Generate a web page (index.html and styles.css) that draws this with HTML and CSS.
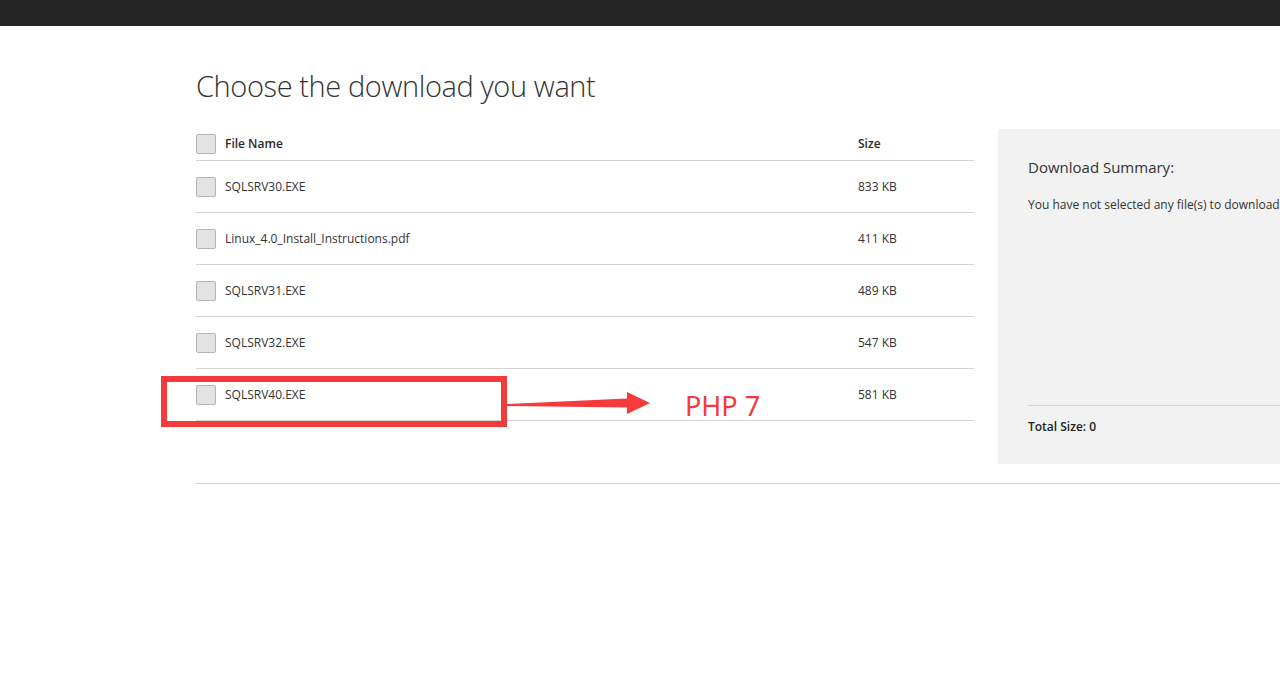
FILE: index.html
```html
<!DOCTYPE html>
<html>
<head>
  <title>Choose the download you want</title>
  <link rel="stylesheet" href="styles.css">
</head>
<body>

<div class="topbar"></div>

<div class="content">
  <h1>Choose the download you want</h1>

  <div class="layout">
    <div class="files">
      <div class="row head">
        <span class="check"></span>
        <span class="name">File Name</span>
        <span class="size">Size</span>
      </div>
      <div class="row">
        <span class="check"></span>
        <span class="name">SQLSRV30.EXE</span>
        <span class="size">833 KB</span>
      </div>
      <div class="row">
        <span class="check"></span>
        <span class="name">Linux_4.0_Install_Instructions.pdf</span>
        <span class="size">411 KB</span>
      </div>
      <div class="row">
        <span class="check"></span>
        <span class="name">SQLSRV31.EXE</span>
        <span class="size">489 KB</span>
      </div>
      <div class="row">
        <span class="check"></span>
        <span class="name">SQLSRV32.EXE</span>
        <span class="size">547 KB</span>
      </div>
      <div class="row">
        <span class="check"></span>
        <span class="name">SQLSRV40.EXE</span>
        <span class="size">581 KB</span>
      </div>
    </div>

    <div class="summary">
      <div class="summary-body">
        <h2>Download Summary:</h2>
        <p>You have not selected any file(s) to download.</p>
      </div>
      <div class="summary-total">Total Size: 0</div>
    </div>
  </div>

  <div class="divider"></div>
</div>

<!-- annotation drawn over the screenshot -->
<div class="mark-box"></div>
<svg class="mark-arrow" width="150" height="30" viewBox="0 0 150 30">
  <polygon fill="#f43a3a" points="0,13 0,15 120,16.5 120,23 143,12 120,1 120,7.5"/>
</svg>
<div class="mark-label">PHP 7</div>

</body>
</html>
```

FILE: styles.css
```css
html, body {
  margin: 0;
  padding: 0;
  height: 100%;
  width: 100%;
  overflow: hidden;
  background: white;
  color: #222;
  font-family: "Open Sans", "Noto Sans", sans-serif;
}

.topbar {
  height: 26px;
  background: #262626;
}

.content {
  padding-left: 196px;
}

h1 {
  margin: 0;
  padding-top: 40px;
  height: 63px;
  font-size: 29px;
  font-weight: 300;
  letter-spacing: -0.4px;
  line-height: 40px;
  color: #333;
}

.layout {
  display: flex;
  gap: 24px;
}

.files {
  width: 778px;
  flex-shrink: 0;
}

.row {
  display: flex;
  align-items: center;
  height: 51px;
  border-bottom: 1px solid #d2d2d2;
  font-size: 12px;
  color: #333;
}

.row.head {
  height: 31px;
  font-weight: 600;
  color: #2a2a2a;
}

.row.head .name,
.row.head .size {
  margin-top: -3px;
}

.check {
  width: 18px;
  height: 18px;
  background: #e3e3e3;
  border: 1px solid #b5b5b5;
  border-radius: 2px;
  margin-right: 9px;
}

.row.head .check {
  margin-top: -2px;
}

.row .name {
  flex: 1;
}

.row .size {
  width: 116px;
}

.summary {
  width: 320px;
  flex-shrink: 0;
  height: 335px;
  background: #f2f2f2;
  display: flex;
  flex-direction: column;
  padding-left: 30px;
  box-sizing: border-box;
}

.summary-body {
  flex: 1;
}

.summary h2 {
  margin: 28px 0 0;
  font-size: 15px;
  font-weight: 400;
  color: #333;
}

.summary p {
  margin: 19px 0 0;
  font-size: 12px;
  white-space: nowrap;
  color: #333;
}

.summary-total {
  height: 58px;
  border-top: 1px solid #d2d2d2;
  font-size: 12px;
  font-weight: 600;
  line-height: 42px;
}

.divider {
  margin-top: 19px;
  border-top: 1px solid #d2d2d2;
}

.mark-box {
  position: absolute;
  left: 161px;
  top: 376px;
  width: 334px;
  height: 39px;
  border: 6px solid #f43a3a;
}

.mark-arrow {
  position: absolute;
  left: 507px;
  top: 391px;
}

.mark-label {
  position: absolute;
  left: 685px;
  top: 387px;
  font-family: "Noto Sans", sans-serif;
  font-size: 27px;
  color: #f43a3a;
}
```
